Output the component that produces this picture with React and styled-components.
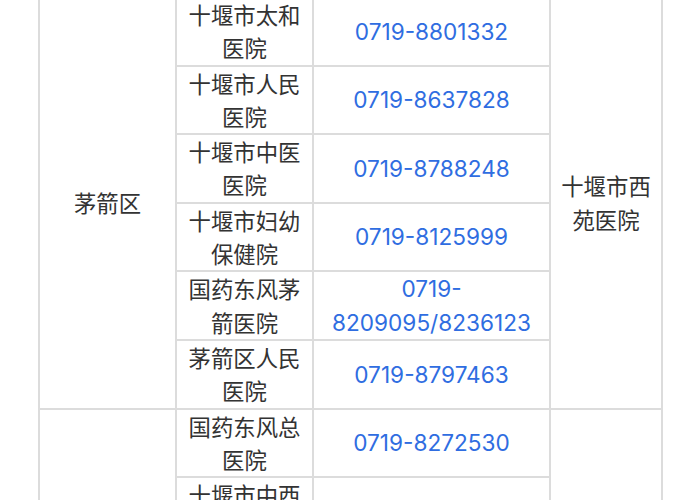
import styled, { createGlobalStyle } from 'styled-components'

const GlobalStyle = createGlobalStyle`
  html, body {
    margin: 0;
    padding: 0;
    background: #fff;
  }
  body {
    font-family: "Noto Sans CJK SC", "Noto Sans", sans-serif;
    color: #333;
  }
`

const districts = [
  {
    name: '茅箭区',
    designated: '十堰市西苑医院',
    hospitals: [
      { name: '十堰市太和医院', phone: '0719-8801332' },
      { name: '十堰市人民医院', phone: '0719-8637828' },
      { name: '十堰市中医医院', phone: '0719-8788248' },
      { name: '十堰市妇幼保健院', phone: '0719-8125999' },
      { name: '国药东风茅箭医院', phone: '0719-8209095/8236123' },
      { name: '茅箭区人民医院', phone: '0719-8797463' },
    ],
  },
  {
    name: '张湾区',
    designated: '国药东风总医院',
    hospitals: [
      { name: '国药东风总医院', phone: '0719-8272530' },
      { name: '十堰市中西医结合医院', phone: '0719-8801880' },
      { name: '十堰市国药东风花果医院', phone: '0719-8269999' },
      { name: '国药东风茅箭医院', phone: '0719-8219120' },
      { name: '张湾区人民医院', phone: '0719-8226720' },
    ],
  },
]

// 하이픈 뒤에서 줄바꿈 허용 (0719-/8209095...)
const Phone = ({ value }) => {
  const [area, rest] = value.split('-')
  return (
    <>
      {area}-<wbr />
      {rest}
    </>
  )
}

const App = () => {
  return (
    <>
      <GlobalStyle />
      <Table>
        <colgroup>
          <Col $w={137} />
          <Col $w={137} />
          <Col $w={237} />
          <Col $w={112} />
        </colgroup>
        <tbody>
          {districts.map((d) =>
            d.hospitals.map((h, i) => (
              <tr key={d.name + h.name}>
                {i === 0 && <Cell rowSpan={d.hospitals.length}>{d.name}</Cell>}
                <Cell>{h.name}</Cell>
                <Cell $phone>
                  <Phone value={h.phone} />
                </Cell>
                {i === 0 && <Cell rowSpan={d.hospitals.length}>{d.designated}</Cell>}
              </tr>
            ))
          )}
        </tbody>
      </Table>
    </>
  )
}

const Table = styled.table`
  margin: -4px 38px 0 38px;
  width: 625px;
  border-collapse: collapse;
  table-layout: fixed;
`

const Col = styled.col`
  width: ${(p) => p.$w}px;
`

const Cell = styled.td`
  border: 2px solid #dcdcdc;
  padding: 0 10px;
  height: 66px;
  text-align: center;
  vertical-align: middle;
  font-size: ${(p) => (p.$phone ? '22.6px' : '22.4px')};
  line-height: 33.3px;
  word-break: ${(p) => (p.$phone ? 'normal' : 'break-all')};
  color: ${(p) => (p.$phone ? '#2f6de1' : '#333')};
  font-family: ${(p) =>
    p.$phone
      ? '"Inter", "Noto Sans CJK SC", sans-serif'
      : '"Noto Sans CJK SC", "Noto Sans", sans-serif'};
`

export default App
